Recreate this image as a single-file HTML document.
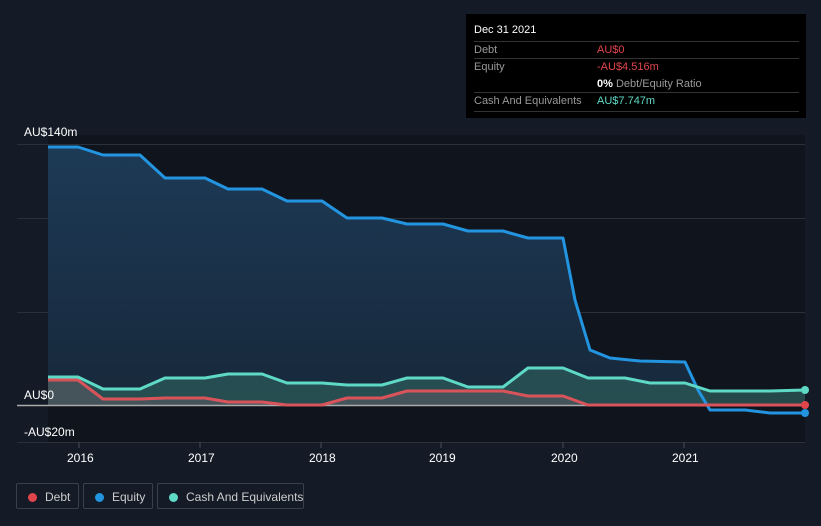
<!DOCTYPE html>
<html><head><meta charset="utf-8"><style>
body{margin:0;width:821px;height:526px;background:#151b26;font-family:"Liberation Sans",sans-serif;overflow:hidden;position:relative}
.t{position:absolute;color:#fff;font-size:12px}
.tip{position:absolute;left:466px;top:14px;width:340px;height:104px;background:#000;font-size:11px}
.row{position:absolute;left:8px;width:325px;border-top:1px solid #333}
.lg{position:absolute;top:483px;height:26px;border:1px solid #3a404b;border-radius:2px;color:#ccc;font-size:12px;line-height:26px;box-sizing:border-box;white-space:nowrap;overflow:hidden}
.dot{display:inline-block;width:9px;height:9px;border-radius:50%;margin:0 8px 0 11px;vertical-align:-1px}
</style></head><body>
<svg width="821" height="526" style="position:absolute;left:0;top:0">
<defs><linearGradient id="g" x1="0" y1="0" x2="0" y2="1"><stop offset="0" stop-color="#1d3a56"/><stop offset="1" stop-color="#17283a"/></linearGradient></defs>
<rect x="48" y="135" width="757" height="307" fill="#10151d"/>
<g stroke="#2a313c" stroke-width="1"><line x1="17" y1="144.5" x2="805" y2="144.5"/><line x1="17" y1="218.5" x2="805" y2="218.5"/><line x1="17" y1="312.5" x2="805" y2="312.5"/><line x1="17" y1="442.5" x2="805" y2="442.5"/></g>
<path d="M48,147 L78,147 103,155 140,155 165,178 205,178 228,189 262,189 287,201 322,201 347,218 382,218 407,224 443,224 468,231 503,231 528,238 563,238 575,300 590,350 610,358 640,361 685,362 698,390 710,405 L48,405Z" fill="url(#g)"/>
<path d="M48,377 L78,377 103,389 140,389 165,378 205,378 228,374 262,374 287,383 322,383 347,385 382,385 407,378 443,378 468,387 503,387 528,368 563,368 588,378 625,378 650,383 685,383 710,391 770,391 805,390 L805,405 48,405Z" fill="#2a5656" opacity=".8"/>
<path d="M48,380 L78,380 103,399 140,399 165,398 205,398 228,402 262,402 287,405 L48,405Z M322,405 347,398 382,398 407,391 503,391 528,396 563,396 588,405Z" fill="#5a5a62" opacity=".6"/>
<line x1="17" y1="405.5" x2="805" y2="405.5" stroke="#aaa" stroke-width="1.5"/>
<path d="M48,147 L78,147 103,155 140,155 165,178 205,178 228,189 262,189 287,201 322,201 347,218 382,218 407,224 443,224 468,231 503,231 528,238 563,238 575,300 590,350 610,358 640,361 685,362 698,390 710,410 745,410 770,413 805,413" fill="none" stroke="#2394e0" stroke-width="3" stroke-linejoin="round"/>
<path d="M48,380 L78,380 103,399 140,399 165,398 205,398 228,402 262,402 287,405 322,405 347,398 382,398 407,391 503,391 528,396 563,396 588,405 805,405" fill="none" stroke="#d9545a" stroke-width="3" stroke-linejoin="round"/>
<path d="M48,377 L78,377 103,389 140,389 165,378 205,378 228,374 262,374 287,383 322,383 347,385 382,385 407,378 443,378 468,387 503,387 528,368 563,368 588,378 625,378 650,383 685,383 710,391 770,391 805,390" fill="none" stroke="#5ed9c6" stroke-width="3" stroke-linejoin="round"/>
<circle cx="805" cy="390" r="4" fill="#5ed9c6"/><circle cx="805" cy="405" r="4" fill="#e0454c"/><circle cx="805" cy="413" r="4" fill="#2394e0"/>
<g stroke="#444b57"><line x1="79" y1="442" x2="79" y2="448"/><line x1="200" y1="442" x2="200" y2="448"/><line x1="321" y1="442" x2="321" y2="448"/><line x1="441" y1="442" x2="441" y2="448"/><line x1="563" y1="442" x2="563" y2="448"/><line x1="684" y1="442" x2="684" y2="448"/></g>
</svg>
<div class="t" style="left:24px;top:125px">AU$140m</div>
<div class="t" style="left:24px;top:388px">AU$0</div>
<div class="t" style="left:24px;top:425px">-AU$20m</div>
<div class="t" style="left:67px;top:451px">2016</div>
<div class="t" style="left:188px;top:451px">2017</div>
<div class="t" style="left:309px;top:451px">2018</div>
<div class="t" style="left:429px;top:451px">2019</div>
<div class="t" style="left:551px;top:451px">2020</div>
<div class="t" style="left:672px;top:451px">2021</div>
<div class="tip">
<div style="position:absolute;left:8px;top:10px;color:#fff">Dec 31 2021</div>
<div class="row" style="top:27px;height:17px"><span style="color:#999;position:absolute;top:2px">Debt</span><span style="color:#e0454c;position:absolute;left:123px;top:2px">AU$0</span></div>
<div class="row" style="top:44px;height:34px"><span style="color:#999;position:absolute;top:2px">Equity</span><span style="color:#e0454c;position:absolute;left:123px;top:2px">-AU$4.516m</span><span style="color:#999;position:absolute;left:123px;top:19px"><b style="color:#fff">0%</b> Debt/Equity Ratio</span></div>
<div class="row" style="top:78px;height:18px;border-bottom:1px solid #333"><span style="color:#999;position:absolute;top:2px">Cash And Equivalents</span><span style="color:#5ed9c6;position:absolute;left:123px;top:2px">AU$7.747m</span></div>
</div>
<div class="lg" style="left:16px;width:63px"><span class="dot" style="background:#e0454c"></span>Debt</div>
<div class="lg" style="left:83px;width:70px"><span class="dot" style="background:#2394e0"></span>Equity</div>
<div class="lg" style="left:157px;width:147px"><span class="dot" style="background:#5ed9c6"></span>Cash And Equivalents</div>
</body></html>
